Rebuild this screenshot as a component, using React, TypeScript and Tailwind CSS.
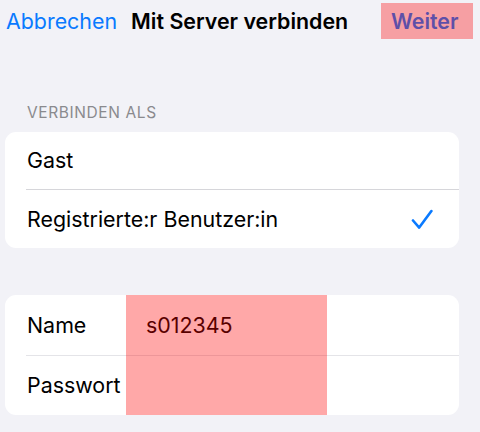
import React from "react";

const Check: React.FC = () => (
  <svg width="22" height="21" viewBox="0 0 22 21" fill="none">
    <path
      d="M2 11.5 L8.2 18.6 L20.4 2"
      stroke="#0a7aff"
      strokeWidth="2.6"
      strokeLinecap="round"
      strokeLinejoin="round"
    />
  </svg>
);

const App: React.FC = () => {
  return (
    <div className="w-[480px] h-[432px] overflow-hidden bg-[#f2f2f7] font-['Inter','Liberation_Sans',sans-serif] text-black">
      {/* nav bar */}
      <div className="flex items-center h-[42px] pl-[6px] pr-[7px] text-[21.4px] leading-[25px]">
        <button className="text-[#0a7aff]">Abbrechen</button>
        <span className="ml-[14px] font-semibold">Mit Server verbinden</span>
        <div className="relative ml-auto w-[92px] h-[36px] flex items-center pl-[10px]">
          <button className="text-[#0a7aff] font-semibold">Weiter</button>
          <div className="absolute inset-0 bg-[rgba(255,0,0,0.34)]" />
        </div>
      </div>

      <div className="mt-[62px] pl-[27px] text-[15.5px] leading-[18px] tracking-[0.6px] text-[#8a8a8e] uppercase">
        Verbinden als
      </div>

      <div className="mt-[10px] mx-[5px] w-[454px] rounded-[11px] bg-white text-[21.4px] leading-[25px]">
        <div className="h-[57px] flex items-center pl-[22px]">Gast</div>
        <div className="ml-[21px] h-px bg-[#d6d6da]" />
        <div className="h-[58px] flex items-center justify-between pl-[22px] pr-[26px]">
          <span>Registrierte:r Benutzer:in</span>
          <Check />
        </div>
      </div>

      <div className="relative mt-[47px] mx-[5px] w-[454px] rounded-[11px] bg-white text-[21.4px] leading-[25px] overflow-hidden">
        <div className="h-[60px] flex items-center pl-[22px]">
          <span className="w-[119px]">Name</span>
          <span>s012345</span>
        </div>
        <div className="ml-[21px] h-px bg-[#e4e4e8]" />
        <div className="h-[59px] flex items-center pl-[22px]">
          <span className="w-[119px]">Passwort</span>
          <span />
        </div>
        <div className="absolute top-0 bottom-0 left-[121px] w-[201px] bg-[rgba(255,0,0,0.34)]" />
      </div>
    </div>
  );
};

export default App;
